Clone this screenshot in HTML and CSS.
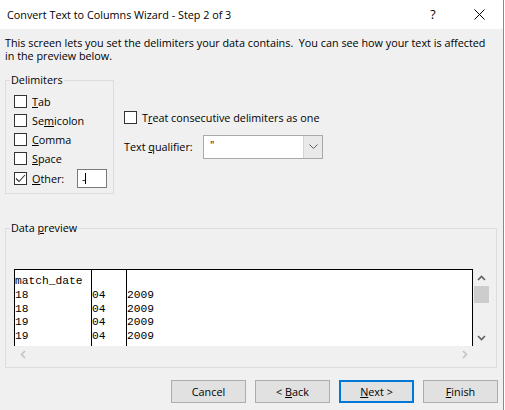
FILE: index.html
```html
<!DOCTYPE html>
<html>
<head>
<meta charset="utf-8">
<link rel="stylesheet" href="styles.css">
</head>
<body>
<div class="window">
  <div class="titlebar">
    <span class="title">Convert Text to Columns Wizard - Step 2 of 3</span>
    <span class="help">?</span>
    <span class="close"><svg width="11" height="11" viewBox="0 0 11 11"><path d="M0.5 0.5 L10.5 10.5 M10.5 0.5 L0.5 10.5" stroke="#000" stroke-width="1" fill="none"/></svg></span>
  </div>
  <div class="content">
    <p class="desc">This screen lets you set the delimiters your data contains.&nbsp; You can see how your text is affected<br>in the preview below.</p>
    <div class="options">
      <fieldset class="group delims">
        <legend>Delimiters</legend>
        <div class="row"><span class="cb"></span><span class="lbl"><u>T</u>ab</span></div>
        <div class="row"><span class="cb"></span><span class="lbl">Se<u>m</u>icolon</span></div>
        <div class="row"><span class="cb"></span><span class="lbl"><u>C</u>omma</span></div>
        <div class="row"><span class="cb"></span><span class="lbl"><u>S</u>pace</span></div>
        <div class="row other">
          <span class="cb"><svg width="11" height="11" viewBox="0 0 11 11"><path d="M1 5.5 L4 8.5 L10 2" stroke="#333" stroke-width="1.1" fill="none"/></svg></span>
          <span class="lbl"><u>O</u>ther:</span>
          <span class="textbox"><span class="dash">-</span><i class="caret"></i></span>
        </div>
      </fieldset>
      <div class="right">
        <div class="row treat"><span class="cb"></span><span class="lbl">T<u>r</u>eat consecutive delimiters as one</span></div>
        <div class="qual">
          <span class="qlbl">Text <u>q</u>ualifier:</span>
          <span class="combo">
            <span class="val">"</span>
            <span class="drop"><svg width="9" height="6" viewBox="0 0 9 6"><path d="M0.5 0.5 L4.5 4.5 L8.5 0.5" stroke="#606060" stroke-width="1" fill="none"/></svg></span>
          </span>
        </div>
      </div>
    </div>
    <fieldset class="group previewgroup">
      <legend>Data <u>p</u>review</legend>
      <div class="preview">
        <div class="pv-top">
          <div class="grid">
            <div class="col c1">
              <div>match_date</div>
              <div>18</div>
              <div>18</div>
              <div>19</div>
              <div>19</div>
            </div>
            <div class="col c2">
              <div>&nbsp;</div>
              <div>04</div>
              <div>04</div>
              <div>04</div>
              <div>04</div>
            </div>
            <div class="col c3">
              <div>&nbsp;</div>
              <div>2009</div>
              <div>2009</div>
              <div>2009</div>
              <div>2009</div>
            </div>
          </div>
          <div class="vscroll">
            <span class="arrow"><svg width="9" height="6" viewBox="0 0 9 6"><path d="M1 5 L4.5 1.5 L8 5" stroke="#606060" stroke-width="1.6" fill="none"/></svg></span>
            <span class="thumb"></span>
            <span class="spacer"></span>
            <span class="arrow"><svg width="9" height="6" viewBox="0 0 9 6"><path d="M1 1 L4.5 4.5 L8 1" stroke="#606060" stroke-width="1.6" fill="none"/></svg></span>
          </div>
        </div>
        <div class="hscroll">
          <span class="harrow"><svg width="6" height="9" viewBox="0 0 6 9"><path d="M5 1 L1.5 4.5 L5 8" stroke="#c2c2c2" stroke-width="1.6" fill="none"/></svg></span>
          <span class="harrow"><svg width="6" height="9" viewBox="0 0 6 9"><path d="M1 1 L4.5 4.5 L1 8" stroke="#c2c2c2" stroke-width="1.6" fill="none"/></svg></span>
        </div>
      </div>
    </fieldset>
    <div class="buttons">
      <button class="btn">Cancel</button>
      <button class="btn">&lt; <u>B</u>ack</button>
      <button class="btn default"><u>N</u>ext &gt;</button>
      <button class="btn"><u>F</u>inish</button>
    </div>
  </div>
</div>
</body>
</html>
```

FILE: styles.css
```css
html, body {
  margin: 0;
  padding: 0;
  background: #ffffff;
}
body {
  font-family: "Open Sans", "Noto Sans", sans-serif;
  font-size: 10.8px;
  color: #000;
}
.window {
  width: 503px;
  height: 410px;
  background: #f0f0f0;
  border-right: 1px solid #8a8a8a;
  overflow: hidden;
}
.titlebar {
  height: 29px;
  background: #fff;
  display: flex;
  align-items: center;
}
.title {
  padding-left: 7px;
  flex: 1;
  line-height: 14px;
}
.help {
  width: 12px;
  text-align: center;
  margin-right: 35px;
  font-size: 12.5px;
}
.close {
  width: 11px;
  height: 11px;
  display: flex;
  margin-right: 18px;
}
.content {
  padding: 0 5px;
}
.desc {
  margin: 8px 0 0 0;
  line-height: 12.5px;
  white-space: nowrap;
}
.options {
  display: flex;
  align-items: flex-start;
  margin-top: 11px;
}
.group {
  margin: 0;
  border: 1px solid #dcdcdc;
  box-sizing: border-box;
  padding: 0 0 5px 8px;
  min-width: 0;
}
.group legend {
  padding: 0 1px;
  margin-left: -4px;
  line-height: 14px;
}
.delims {
  width: 109px;
}
.row {
  display: flex;
  align-items: center;
  height: 19px;
}
.delims legend + .row {
  margin-top: 5px;
}
.row.other {
  margin-top: 1px;
}
.cb {
  width: 13px;
  height: 13px;
  box-sizing: border-box;
  border: 1px solid #333;
  background: #fff;
  display: flex;
  align-items: center;
  justify-content: center;
  flex: none;
}
.lbl {
  margin-left: 5px;
  line-height: 14px;
}
.textbox {
  margin-left: auto;
  margin-right: 6px;
  width: 30px;
  height: 19px;
  box-sizing: border-box;
  border: 1px solid #7a7a7a;
  background: #fff;
  display: flex;
  align-items: center;
  padding-left: 4px;
  line-height: 14px;
}
.dash {
  display: inline-block;
}
.caret {
  display: inline-block;
  width: 1px;
  height: 11px;
  background: #000;
}
.right {
  margin-left: 10px;
}
.treat {
  margin-top: 35px;
}
.qual {
  display: flex;
  align-items: center;
  margin-top: 8px;
}
.qlbl {
  width: 79px;
  line-height: 14px;
}
.combo {
  width: 120px;
  height: 24px;
  box-sizing: border-box;
  border: 1px solid #a9a9a9;
  background: #fff;
  display: flex;
}
.val {
  flex: 1;
  padding-left: 6px;
  line-height: 18px;
}
.drop {
  width: 18px;
  background: #e9e9e9;
  border-left: 1px solid #d4d4d4;
  display: flex;
  align-items: center;
  justify-content: center;
}
.previewgroup {
  width: 492px;
  margin-top: 27px;
  padding-bottom: 4px;
}
.preview {
  margin-top: 34px;
}
.pv-top {
  display: flex;
}
.grid {
  width: 459px;
  height: 77px;
  box-sizing: border-box;
  border: 1px solid #000;
  border-bottom: none;
  background: #fff;
  display: flex;
  font-family: "Liberation Mono", monospace;
  font-size: 11.25px;
  line-height: 13.75px;
}
.col {
  padding-top: 5px;
  box-sizing: border-box;
  white-space: nowrap;
}
.c1 {
  width: 77px;
  border-right: 1px solid #000;
}
.c2 {
  width: 35px;
  border-right: 1px solid #000;
}
.c3 {
  flex: 1;
}
.vscroll {
  width: 17px;
  height: 77px;
  display: flex;
  flex-direction: column;
}
.arrow {
  height: 17px;
  display: flex;
  align-items: center;
  justify-content: center;
}
.thumb {
  height: 17px;
  margin: 0 1px;
  background: #cdcdcd;
}
.spacer {
  flex: 1;
}
.hscroll {
  width: 459px;
  height: 17px;
  display: flex;
  justify-content: space-between;
}
.harrow {
  width: 17px;
  display: flex;
  align-items: center;
  justify-content: center;
}
.buttons {
  display: flex;
  justify-content: flex-end;
  gap: 9px;
  margin-top: 12px;
}
.btn {
  width: 75px;
  height: 23px;
  box-sizing: border-box;
  border: 1px solid #adadad;
  background: #e1e1e1;
  font-family: "Open Sans", "Noto Sans", sans-serif;
  font-size: 10.8px;
  color: #000;
  padding: 0;
  margin: 0;
}
.btn.default {
  border: 2px solid #0078d7;
}
```
